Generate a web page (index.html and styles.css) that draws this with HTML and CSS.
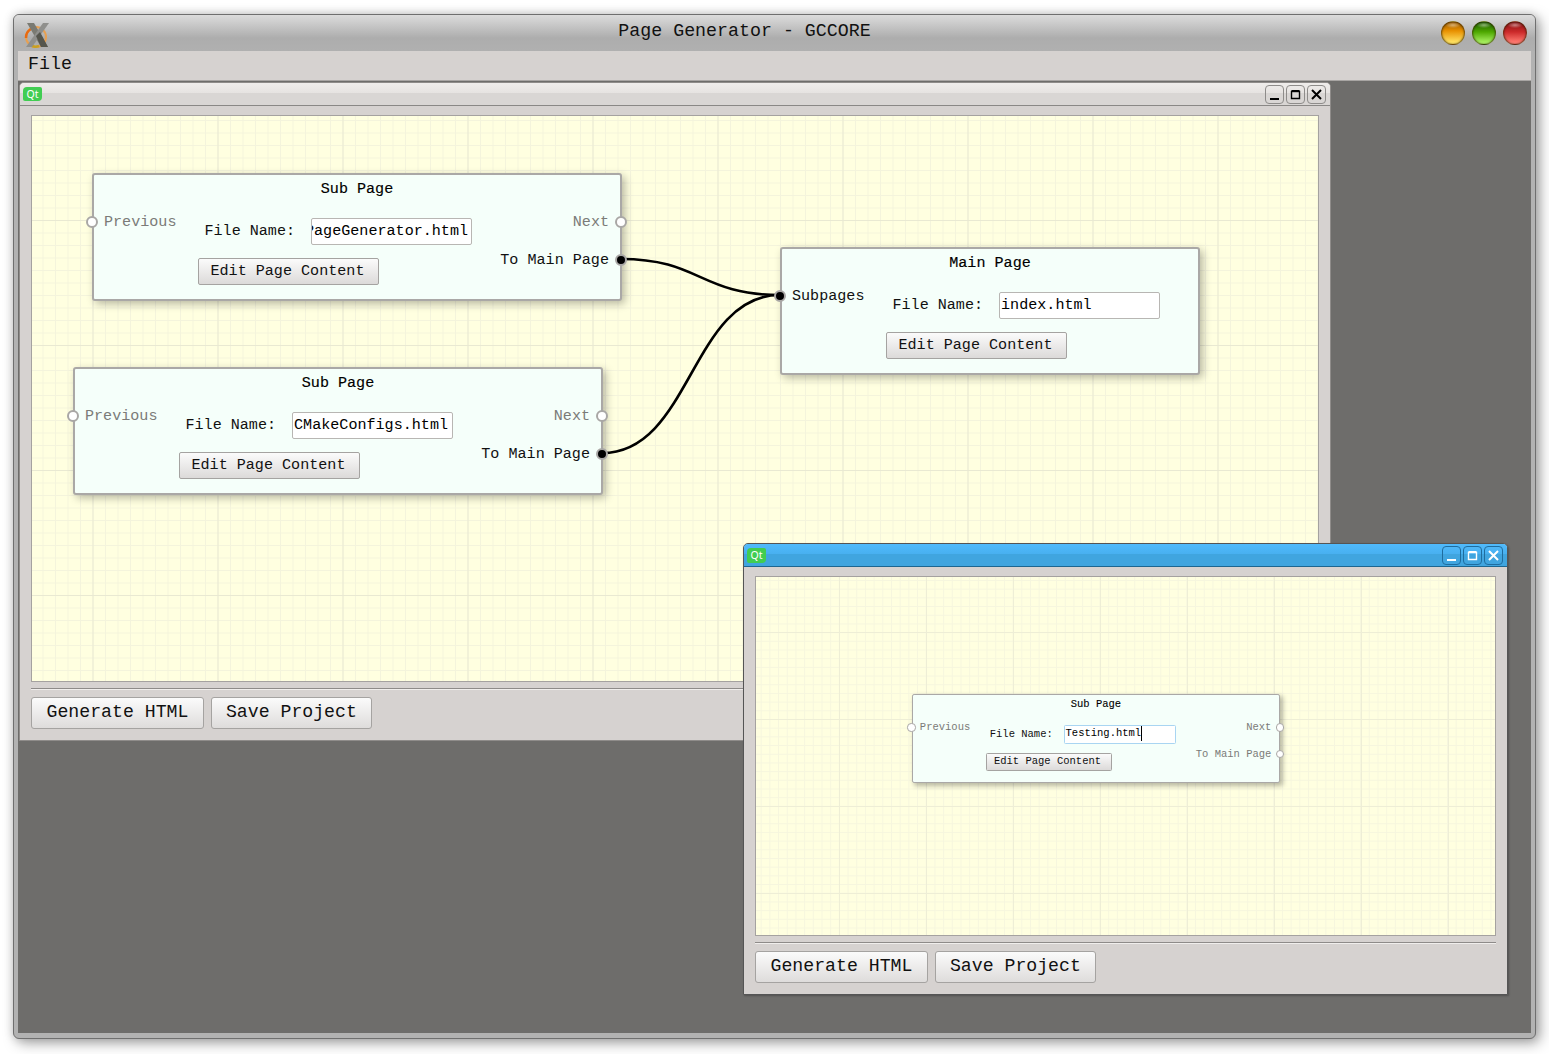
FILE: index.html
```html
<!DOCTYPE html>
<html lang="en">
<head>
    <meta charset="UTF-8">
    <title>Page Generator - GCCORE</title>
    <link rel="stylesheet" href="styles.css">
</head>
<body>
    <div class="app">
        <header class="app-title">
            <svg class="app-logo" width="28" height="28" viewBox="0 0 28 28">
                <circle cx="13" cy="16" r="10" fill="none" stroke="#e8a050" stroke-width="2"/>
                <path d="M3 17a10 10 0 0 1 5-9" fill="none" stroke="#e86a10" stroke-width="2.5"/>
                <path d="M7 24a10 10 0 0 0 9 1" fill="none" stroke="#c8a020" stroke-width="2.5"/>
                <path d="M4 2h7l14 24h-7z" fill="#7a7a72"/>
                <path d="M20 2h6L9 26H3z" fill="#8f8f8c"/>
                <path d="M13 15l4-4 8 15h-7z" fill="#55554c"/>
            </svg>
            <div class="app-name">Page Generator - GCCORE</div>
            <div class="orbs">
                <span class="orb orb-min"></span>
                <span class="orb orb-max"></span>
                <span class="orb orb-close"></span>
            </div>
        </header>
        <nav class="menubar"><span>File</span></nav>

        <main class="mdi">
            <section class="win win-back">
                <div class="win-title">
                    <span class="qt-badge">Qt</span>
                    <div class="win-btns">
                        <button class="win-btn"><svg width="13" height="13" viewBox="0 0 13 13"><path d="M2 11h9" stroke-width="2"/></svg></button>
                        <button class="win-btn"><svg width="13" height="13" viewBox="0 0 13 13"><path d="M2.5 3.5h8v7h-8zM2.5 2.8h8" stroke-width="1.4"/></svg></button>
                        <button class="win-btn"><svg width="13" height="13" viewBox="0 0 13 13"><path d="M2 2l9 9M11 2l-9 9" stroke-width="2"/></svg></button>
                    </div>
                </div>
                <div class="win-body">
                    <div class="canvas canvas-back">
                        <svg class="wires" width="1286" height="565">
                            <path d="M589 143C668 143 668 179 748 179"/>
                            <path d="M570 337C659 337 659 179 748 179"/>
                        </svg>

                        <div class="node node-a">
                            <div class="node-title">Sub Page</div>
                            <div class="node-body">
                                <div class="ports"><div class="port-name off">Previous</div></div>
                                <div class="node-form">
                                    <div class="file-row">
                                        <span>File Name:</span>
                                        <div class="field field-end"><span>PageGenerator.html</span></div>
                                    </div>
                                    <button class="edit-btn">Edit Page Content</button>
                                </div>
                                <div class="ports ports-right">
                                    <div class="port-name off">Next</div>
                                    <div class="port-name">To Main Page</div>
                                </div>
                            </div>
                            <span class="port port-prev"></span>
                            <span class="port port-next"></span>
                            <span class="port port-main on"></span>
                        </div>

                        <div class="node node-b">
                            <div class="node-title">Sub Page</div>
                            <div class="node-body">
                                <div class="ports"><div class="port-name off">Previous</div></div>
                                <div class="node-form">
                                    <div class="file-row">
                                        <span>File Name:</span>
                                        <div class="field"><span>CMakeConfigs.html</span></div>
                                    </div>
                                    <button class="edit-btn">Edit Page Content</button>
                                </div>
                                <div class="ports ports-right">
                                    <div class="port-name off">Next</div>
                                    <div class="port-name">To Main Page</div>
                                </div>
                            </div>
                            <span class="port port-prev"></span>
                            <span class="port port-next"></span>
                            <span class="port port-main on"></span>
                        </div>

                        <div class="node node-main">
                            <div class="node-title">Main Page</div>
                            <div class="node-body">
                                <div class="ports"><div class="port-name">Subpages</div></div>
                                <div class="node-form">
                                    <div class="file-row">
                                        <span>File Name:</span>
                                        <div class="field"><span>index.html</span></div>
                                    </div>
                                    <button class="edit-btn">Edit Page Content</button>
                                </div>
                            </div>
                            <span class="port port-prev on"></span>
                        </div>
                    </div>
                    <div class="separator"></div>
                    <div class="actions">
                        <button class="action-btn">Generate HTML</button>
                        <button class="action-btn">Save Project</button>
                    </div>
                </div>
            </section>

            <section class="win win-front">
                <div class="win-title">
                    <span class="qt-badge">Qt</span>
                    <div class="win-btns">
                        <button class="win-btn"><svg width="13" height="13" viewBox="0 0 13 13"><path d="M2 11h9" stroke-width="2"/></svg></button>
                        <button class="win-btn"><svg width="13" height="13" viewBox="0 0 13 13"><path d="M2.5 3.5h8v7h-8zM2.5 2.8h8" stroke-width="1.4"/></svg></button>
                        <button class="win-btn"><svg width="13" height="13" viewBox="0 0 13 13"><path d="M2 2l9 9M11 2l-9 9" stroke-width="2"/></svg></button>
                    </div>
                </div>
                <div class="win-body">
                    <div class="canvas canvas-front">
                        <div class="node node-small">
                            <div class="node-title">Sub Page</div>
                            <div class="node-body">
                                <div class="ports"><div class="port-name off">Previous</div></div>
                                <div class="node-form">
                                    <div class="file-row">
                                        <span>File Name:</span>
                                        <div class="field field-focus"><span class="caret">Testing.html</span></div>
                                    </div>
                                    <button class="edit-btn">Edit Page Content</button>
                                </div>
                                <div class="ports ports-right">
                                    <div class="port-name off">Next</div>
                                    <div class="port-name off">To Main Page</div>
                                </div>
                            </div>
                            <span class="port port-prev"></span>
                            <span class="port port-next"></span>
                            <span class="port port-main"></span>
                        </div>
                    </div>
                    <div class="separator"></div>
                    <div class="actions">
                        <button class="action-btn">Generate HTML</button>
                        <button class="action-btn">Save Project</button>
                    </div>
                </div>
            </section>
        </main>
    </div>
</body>
</html>
```
FILE: styles.css
```css
* { box-sizing: border-box; }
body { margin: 0; width: 1549px; height: 1054px; overflow: hidden; background: #fff; font-family: "Liberation Mono", monospace; color: #111; }
button { font-family: inherit; color: inherit; cursor: pointer; }

/* outer window */
.app { display: flex; flex-direction: column; width: 1523px; height: 1025px; margin: 14px 0 0 13px; background: #b2b2b2; border: 1px solid #6f6f6f; border-radius: 6px; box-shadow: 4px 4px 14px rgba(0,0,0,.35), 0 0 10px rgba(0,0,0,.15); }
.app-title { display: grid; grid-template-columns: 60px 1fr 120px; align-items: center; height: 36px; flex: none; background: linear-gradient(#dcdcdc, #adadad 64%, #b0b0b0); border-radius: 5px 5px 0 0; }
.app-logo { margin: 3px 0 0 9px; }
.app-name { padding-bottom: 4px; font-size: 18.3px; text-align: center; }
.orbs { display: flex; gap: 7px; justify-content: flex-end; padding-right: 8px; }
.orb { width: 24px; height: 24px; border-radius: 50%; border: 1px solid rgba(60,40,0,.55); box-shadow: inset 0 0 2px rgba(0,0,0,.5); }
.orb-min { background: radial-gradient(ellipse 35% 14% at 50% 14%, rgba(255,255,255,.45), transparent), linear-gradient(#9a5a00, #e89000 40%, #ffe060 90%); }
.orb-max { background: radial-gradient(ellipse 35% 14% at 50% 14%, rgba(255,255,255,.45), transparent), linear-gradient(#1e5a00, #4ea800 45%, #a8f060 92%); }
.orb-close { background: radial-gradient(ellipse 35% 14% at 50% 14%, rgba(255,255,255,.45), transparent), linear-gradient(#861414, #cc2a2a 45%, #ff7a70 92%); }

.menubar { flex: none; height: 30px; margin: 0 4px; padding-left: 10px; background: #d6d2d0; border-bottom: 1px solid #a8a5a3; font-size: 18.3px; line-height: 26px; }
.mdi { position: relative; flex: 1; margin: 0 4px 5px; background: #6e6d6b; }

/* sub windows */
.win { position: absolute; display: flex; flex-direction: column; background: #d6d2d0; border: 1px solid #8f8c8a; border-radius: 5px 5px 0 0; }
.win-back { left: 1px; top: 1px; width: 1312px; height: 659px; }
.win-front { left: 725px; top: 462px; width: 765px; height: 452px; border-color: #555; box-shadow: 1px 1px 2px rgba(0,0,0,.25); }
.win-title { display: flex; align-items: center; justify-content: space-between; flex: none; height: 23px; padding: 0 4px 0 3px; border-bottom: 1px solid #8a8886; border-radius: 4px 4px 0 0; background: linear-gradient(#efedeb, #e6e3e1 45%, #d9d6d4 46%, #d9d6d4); }
.win-front .win-title { border-bottom-color: #1d6690; background: linear-gradient(#50bafc, #48b0f0 45%, #40a5df 46%, #40a5df); }
.qt-badge { width: 19px; height: 14px; background: #41cd52; border-radius: 4px 2px 4px 2px; color: #fff; font: 10.5px/14px "Noto Sans", sans-serif; text-align: center; }
.win-front .qt-badge { height: 15px; }
.win-btns { display: flex; gap: 2px; }
.win-btn { display: flex; align-items: center; justify-content: center; width: 19px; height: 19px; padding: 0; background: transparent; border: 1px solid #8e8c8a; border-radius: 4px; }
.win-btn svg { fill: none; stroke: #000; }
.win-front .win-btn { border-color: #1f6d9f; }
.win-front .win-btn svg { stroke: #fff; }

.win-body { display: flex; flex-direction: column; flex: 1; padding: 9px 11px 11px; }
.canvas { position: relative; flex: 1; border: 1px solid #a5a2a0; overflow: hidden; background-color: #ffffe0; }
.canvas-back { background-image: linear-gradient(90deg, #e9e9d2 1px, transparent 1px), linear-gradient(#e9e9d2 1px, transparent 1px), linear-gradient(90deg, #f4f4dc 1px, transparent 1px), linear-gradient(#f4f4dc 1px, transparent 1px); background-size: 125px 125px, 125px 125px, 12.5px 12.5px, 12.5px 12.5px; background-position: 60.5px 0, 0 104px, 10.5px 0, 0 4px; }
.canvas-front { background-image: linear-gradient(90deg, #eeeed6 1px, transparent 1px), linear-gradient(#eeeed6 1px, transparent 1px), linear-gradient(90deg, #f6f6de 1px, transparent 1px), linear-gradient(#f6f6de 1px, transparent 1px); background-size: 87px 87px, 87px 87px, 8.7px 8.7px, 8.7px 8.7px; background-position: 83px 0, 0 55px, 4.7px 0, 0 3px; }
.separator { flex: none; height: 2px; margin: 6px 0 7px; background: #8e8b89; border-bottom: 1px solid #f0eeec; }
.actions { display: flex; gap: 7px; flex: none; }
.action-btn { height: 32px; padding: 0 14px 2px; font-size: 18.2px; background: linear-gradient(#fbfbfb, #dedcdb); border: 1px solid #a5a3a1; border-radius: 3px; }
.action-btn:first-child { padding: 0 14.5px 2px; }

/* graph */
.wires { position: absolute; left: 0; top: 0; fill: none; stroke: #000; stroke-width: 2.6; }
.node { position: absolute; width: 530px; height: 128px; background: #f5fffa; border: 2px solid #aaa8a6; border-radius: 3px; box-shadow: 3px 3px 8px rgba(0,0,0,.28); font-size: 15.1px; color: #111; }
.node-a { left: 60px; top: 57px; }
.node-b { left: 41px; top: 251px; }
.node-main { left: 748px; top: 131px; width: 420px; }
.node-small { zoom: .696; left: 224px; top: 168px; width: 529px; }
.node-title { height: 20px; margin-top: 4px; line-height: 20px; text-align: center; color: #000; -webkit-text-stroke: .15px #000; }
.node-body { display: grid; grid-template-columns: auto auto 1fr; column-gap: 22px; margin-top: 14px; padding: 0 11px 0 10px; }
.ports { display: flex; flex-direction: column; gap: 20px; }
.ports-right { align-items: flex-end; }
.port-name { line-height: 18px; }
.port-name.off { color: #7b7b78; }
.node-form { display: flex; flex-direction: column; align-items: flex-start; gap: 13px; margin-top: 5px; }
.file-row { display: flex; align-items: center; gap: 16px; padding-left: 6px; }
.file-row > span { margin-bottom: 2px; }
.field { display: flex; align-items: center; width: 161px; height: 27px; padding: 0 3px 2px 1px; overflow: hidden; background: #fff; border: 1px solid #b8b6b3; border-radius: 2px; color: #000; }
.field span { flex: none; }
.field-end { justify-content: flex-end; }
.field-focus { border-color: #a9d5f2; }
.caret { border-right: 2px solid #000; line-height: 21px; }
.edit-btn { width: 181px; height: 27px; padding: 0 3px 2px 0; font-size: 15.1px; background: linear-gradient(#fbfbfb, #dcdad9); border: 1px solid #a5a3a1; border-radius: 2px; }

.port { position: absolute; width: 12px; height: 12px; background: #fff; border: 2px solid #a9a7a5; border-radius: 50%; }
.port.on { background: #000; }
.port-prev { left: -8px; top: 41px; }
.port-next { right: -7px; top: 41px; }
.port-main { right: -7px; top: 79px; }
```
